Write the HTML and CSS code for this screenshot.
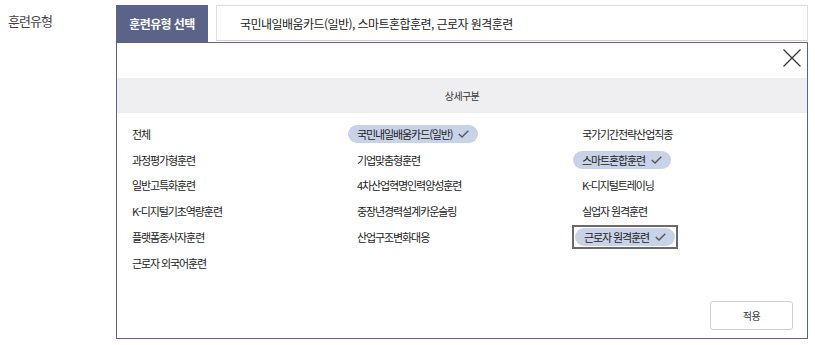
FILE: index.html
```html
<!DOCTYPE html>
<html lang="ko">
<head>
<meta charset="utf-8">
<link rel="stylesheet" href="styles.css">
</head>
<body>
<div class="field">
  <div class="label">훈련유형</div>
  <div class="control">
    <div class="top">
      <div class="tab">훈련유형 선택</div>
      <div class="input">국민내일배움카드(일반), 스마트혼합훈련, 근로자 원격훈련</div>
    </div>
    <div class="panel">
      <div class="panel-head">
        <svg class="close" width="18" height="18" viewBox="0 0 18 18"><path d="M0.5 0.5L17.5 17.5M17.5 0.5L0.5 17.5" stroke="#333" stroke-width="1.2" fill="none"/></svg>
      </div>
      <div class="band">상세구분</div>
      <div class="grid">
        <div class="cell"><span class="item">전체</span></div>
        <div class="cell"><span class="item on">국민내일배움카드(일반)<svg class="chk" width="11" height="8" viewBox="0 0 11 8"><path d="M0.8 4L4 7L10.3 0.8" stroke="#555" stroke-width="1.4" fill="none"/></svg></span></div>
        <div class="cell"><span class="item">국가기간전략산업직종</span></div>
        <div class="cell"><span class="item">과정평가형훈련</span></div>
        <div class="cell"><span class="item">기업맞춤형훈련</span></div>
        <div class="cell"><span class="item on">스마트혼합훈련<svg class="chk" width="11" height="8" viewBox="0 0 11 8"><path d="M0.8 4L4 7L10.3 0.8" stroke="#555" stroke-width="1.4" fill="none"/></svg></span></div>
        <div class="cell"><span class="item">일반고특화훈련</span></div>
        <div class="cell"><span class="item">4차산업혁명인력양성훈련</span></div>
        <div class="cell"><span class="item">K-디지털트레이닝</span></div>
        <div class="cell"><span class="item">K-디지털기초역량훈련</span></div>
        <div class="cell"><span class="item">중장년경력설계카운슬링</span></div>
        <div class="cell"><span class="item">실업자 원격훈련</span></div>
        <div class="cell"><span class="item">플랫폼종사자훈련</span></div>
        <div class="cell"><span class="item">산업구조변화대응</span></div>
        <div class="cell"><span class="ring"><span class="item on">근로자 원격훈련<svg class="chk" width="11" height="8" viewBox="0 0 11 8"><path d="M0.8 4L4 7L10.3 0.8" stroke="#555" stroke-width="1.4" fill="none"/></svg></span></span></div>
        <div class="cell"><span class="item">근로자 외국어훈련</span></div>
      </div>
      <div class="foot"><button class="apply">적용</button></div>
    </div>
  </div>
</div>
</body>
</html>
```
FILE: styles.css
```css
* { box-sizing: border-box; }
html, body { margin: 0; background: #fff; }
body {
  font-family: "Noto Sans CJK KR", "Noto Sans", sans-serif;
  color: #222;
}
.field { display: flex; padding-top: 5px; }
.label {
  width: 116px;
  padding-left: 8px;
  padding-top: 6px;
  font-size: 13px;
  letter-spacing: -1px;
  color: #444;
}
.control { width: 692px; display: flex; flex-direction: column; }
.top { display: flex; height: 37px; gap: 8px; }
.tab {
  width: 92px;
  background: #5b6488;
  color: #fff;
  font-weight: bold;
  font-size: 12px;
  letter-spacing: -0.6px;
  display: flex;
  align-items: center;
  justify-content: center;
}
.input {
  flex: 1;
  height: 36px;
  border: 1px solid #dcdcdc;
  border-bottom-color: #cfcfcf;
  padding-left: 23px;
  display: flex;
  align-items: center;
  font-size: 12px;
  letter-spacing: -0.55px;
  color: #222;
}
.panel {
  border: 1px solid #5b6488;
  height: 297px;
  display: flex;
  flex-direction: column;
}
.panel-head {
  height: 35px;
  display: flex;
  justify-content: flex-end;
  align-items: flex-start;
  padding: 6px 6px 0 0;
}
.band {
  height: 35px;
  background: #efeff2;
  display: flex;
  align-items: center;
  justify-content: center;
  font-size: 10px;
  letter-spacing: -0.6px;
  color: #333;
}
.grid {
  display: grid;
  grid-template-columns: 225px 225px 225px;
  grid-auto-rows: 25.8px;
  padding: 8px 0 0 6px;
}
.cell { display: flex; align-items: center; }
.item {
  display: inline-flex;
  align-items: center;
  height: 18px;
  padding: 0 9px;
  font-size: 11px;
  letter-spacing: -1.1px;
  color: #222;
  border-radius: 9px;
}
.item.on { background: #c9d3e8; }
.chk { margin-left: 6px; }
.ring {
  display: inline-flex;
  border: 2px solid #6a6a6a;
  padding: 1px;
  margin-left: -1px;
}
.foot {
  margin-top: auto;
  display: flex;
  justify-content: flex-end;
  padding: 0 14px 8px 0;
}
.apply {
  width: 83px;
  height: 29px;
  background: #fff;
  border: 1px solid #cfcfcf;
  border-radius: 3px;
  font-family: inherit;
  font-size: 10px;
  color: #333;
  letter-spacing: -0.5px;
}
```
